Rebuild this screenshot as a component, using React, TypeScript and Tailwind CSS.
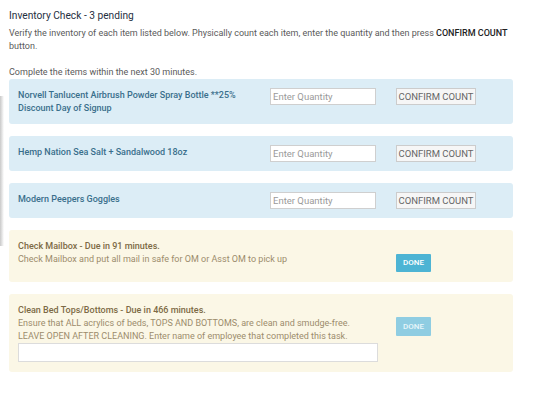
const items = [
  { id: 1, name: 'Norvell Tanlucent Airbrush Powder Spray Bottle **25% Discount Day of Signup' },
  { id: 2, name: 'Hemp Nation Sea Salt + Sandalwood 18oz' },
  { id: 3, name: 'Modern Peepers Goggles' },
]

function InventoryRow({ name }: { name: string }) {
  return (
    <div className="flex items-start rounded-[3px] bg-[#dcedf6] px-[9px] py-[9px]">
      <div className="w-[252px] pr-[9px] text-[9px] font-medium leading-[13px] text-[#3a6f8c]">
        <div className="pt-[1px]">{name}</div>
      </div>
      <div className="w-[126px]">
        <input
          className="block h-[17px] w-[106px] border border-[#cfcfcf] bg-white px-[2px] text-[9.5px] text-[#555] outline-none placeholder:text-[#9a9a9a]"
          placeholder="Enter Quantity"
        />
      </div>
      <div>
        <button className="block h-[17px] w-[80px] border border-[#cccccc] bg-[#f6f6f6] text-[9.5px] leading-none text-[#666]">
          CONFIRM COUNT
        </button>
      </div>
    </div>
  )
}

export default function App() {
  return (
    <div className="relative min-h-[406px] bg-white font-['Roboto',sans-serif]">
      <div className="pointer-events-none absolute left-0 top-[96px] h-[150px] w-[4px] bg-gradient-to-r from-[#c9c9c9] to-white" />
      <div className="w-[522px] px-[9px] pt-[9px]">
        <h3 className="text-[10.2px] leading-[14px] text-[#1f2f3f]">Inventory Check - 3 pending</h3>
        <p className="mr-[-8px] mt-[4px] text-[9px] leading-[13px] text-[#5a5a5a]">
          Verify the inventory of each item listed below. Physically count each item, enter the quantity and then press{' '}
          <span className="font-medium text-[#222]">CONFIRM COUNT</span> button.
          <br />
          <br />
          Complete the items within the next 30 minutes.
        </p>

        <div className="flex flex-col gap-[12px]">
          {items.map(item => (
            <InventoryRow key={item.id} name={item.name} />
          ))}

          <div className="flex items-start rounded-[3px] bg-[#fbf7e6] p-[10px] pl-[9px]">
            <div className="w-[378px] text-[9px] leading-[13px]">
              <div className="font-medium text-[#7d6a45]">Check Mailbox - Due in 91 minutes.</div>
              <div className="text-[#9c8c6c]">Check Mailbox and put all mail in safe for OM or Asst OM to pick up</div>
            </div>
            <div>
              <button className="mt-[14px] block h-[18px] w-[35px] rounded-[1px] bg-[#4db4d4] text-[8px] font-medium leading-none text-white">
                DONE
              </button>
            </div>
          </div>

          <div className="flex items-start rounded-[3px] bg-[#fbf7e6] p-[10px] pl-[9px]">
            <div className="w-[378px] text-[9px] leading-[13px]">
              <div className="font-medium text-[#7d6a45]">Clean Bed Tops/Bottoms - Due in 466 minutes.</div>
              <div className="text-[#9c8c6c]">
                Ensure that ALL acrylics of beds, TOPS AND BOTTOMS, are clean and smudge-free.
                <br />
                LEAVE OPEN AFTER CLEANING. Enter name of employee that completed this task.
              </div>
              <input className="block h-[19px] w-[360px] border border-[#dcdcdc] bg-white outline-none" />
            </div>
            <div>
              <button
                disabled
                className="mt-[13px] block h-[19px] w-[35px] rounded-[1px] bg-[#8fcde2] text-[8px] font-medium leading-none text-[#e8f6fa]"
              >
                DONE
              </button>
            </div>
          </div>
        </div>
      </div>
    </div>
  )
}
